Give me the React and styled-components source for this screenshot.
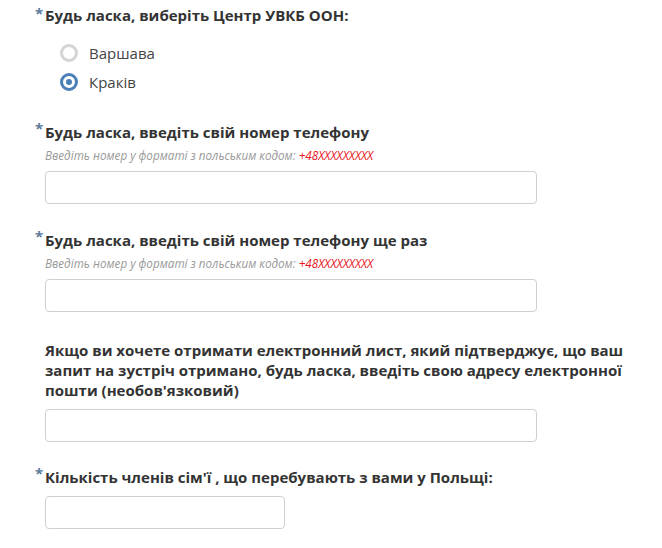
import styled, { createGlobalStyle } from 'styled-components';

const Global = createGlobalStyle`
  body {
    margin: 0;
    background: #fff;
    font-family: "Open Sans", "Noto Sans", sans-serif;
    color: #333;
  }
`;

const Form = styled.div`
  padding: 5px 0 0 45px;
  width: 590px;
`;

const Field = styled.div`
  margin-top: ${props => props.$top || 0}px;
`;

const Label = styled.div`
  position: relative;
  font-size: 15px;
  font-weight: 700;
  line-height: 20px;
  color: #333;
`;

const Star = styled.span`
  position: absolute;
  left: -10px;
  top: ${props => (props.$high ? '-4px' : '-2px')};
  color: #5b7b9c;
  font-size: 15px;
  font-weight: 700;
`;

const Hint = styled.div`
  margin-top: 5px;
  font-size: 11.7px;
  line-height: 16px;
  font-style: italic;
  color: #999;

  b {
    font-weight: 400;
    color: #e8141b;
  }
`;

const Input = styled.input`
  display: block;
  box-sizing: border-box;
  width: ${props => props.$w || 492}px;
  height: 33px;
  margin-top: ${props => props.$top || 8}px;
  border: 1px solid #cfcfcf;
  border-radius: 4px;
  background: #fff;
  outline: none;
`;

const Radios = styled.div`
  margin-top: 18px;
  padding-left: 15px;
  display: flex;
  flex-direction: column;
  gap: 9px;
`;

const RadioRow = styled.label`
  display: flex;
  align-items: center;
  gap: 11px;
  font-size: 15px;
  line-height: 20px;
  color: #444;
`;

const Circle = styled.span`
  box-sizing: border-box;
  width: 18px;
  height: 18px;
  border-radius: 50%;
  border: 3px solid ${props => (props.$on ? '#4b7fb8' : '#d4d4d4')};
  display: flex;
  align-items: center;
  justify-content: center;

  &::after {
    content: '';
    width: 6px;
    height: 6px;
    border-radius: 50%;
    background: ${props => (props.$on ? '#4b7fb8' : 'transparent')};
  }
`;

function Radio({ on, children }) {
  return (
    <RadioRow>
      <Circle $on={on} />
      {children}
    </RadioRow>
  );
}

const hint = (
  <Hint>
    Введіть номер у форматі з польським кодом: <b>+48XXXXXXXXX</b>
  </Hint>
);

export default function App() {
  return (
    <>
      <Global />
      <Form>
        <Field>
          <Label>
            <Star>*</Star>Будь ласка, виберіть Центр УВКБ ООН:
          </Label>
          <Radios>
            <Radio>Варшава</Radio>
            <Radio on>Краків</Radio>
          </Radios>
        </Field>

        <Field $top={30}>
          <Label>
            <Star $high>*</Star>Будь ласка, введіть свій номер телефону
          </Label>
          {hint}
          <Input />
        </Field>

        <Field $top={26}>
          <Label>
            <Star $high>*</Star>Будь ласка, введіть свій номер телефону ще раз
          </Label>
          {hint}
          <Input />
        </Field>

        <Field $top={28}>
          <Label>
            Якщо ви хочете отримати електронний лист, який підтверджує, що ваш запит на
            зустріч отримано, будь ласка, введіть свою адресу електронної пошти
            (необов'язковий)
          </Label>
          <Input $top={9} />
        </Field>

        <Field $top={25}>
          <Label>
            <Star $high>*</Star>Кількість членів сім'ї , що перебувають з вами у Польщі:
          </Label>
          <Input $w={240} $top={9} />
        </Field>
      </Form>
    </>
  );
}
